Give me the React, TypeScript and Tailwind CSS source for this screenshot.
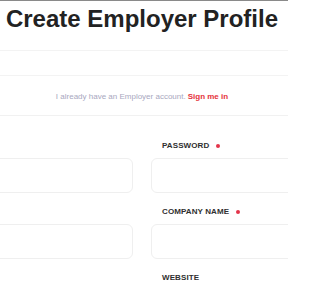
const fields = [
  { right: "PASSWORD", required: true },
  { right: "COMPANY NAME", required: true },
  { right: "WEBSITE", required: false },
];

function Field({ label, required }: { label?: string; required: boolean }) {
  return (
    <div className="flex flex-col">
      <div className="flex items-center h-[10px] pl-[11px] text-[8px] leading-[10px] font-bold text-[#2f2f2f] tracking-[0.1px]">
        {label}
        {label && required && <span className="ml-[7px] w-[4px] h-[4px] rounded-full bg-[#e3344a]" />}
      </div>
      <div className="mt-[7px] h-[35px] rounded-[6px] border border-[#efefef] bg-white" />
    </div>
  );
}

export default function App() {
  return (
    <div
      className="w-[288px] h-[288px] overflow-hidden bg-white border-t border-[#8a8a8a]"
      style={{ fontFamily: '"Liberation Sans", Arial, sans-serif' }}
    >
      <div className="w-[284px]">
        <h1 className="pt-[4px] text-center text-[24px] leading-[28px] font-bold text-[#222222]">
          Create Employer Profile
        </h1>
      </div>
      <div className="mt-[17px] h-[26px] border-y border-[#f3f3f3] bg-white" />
      <div className="w-[284px] h-[39px] pt-[2px] flex items-center justify-center text-[8px] leading-[10px]">
        <span className="text-[#a8a8c0]">I already have an Employer account.</span>
        <span className="ml-[2px] font-bold text-[#e5323c]">Sign me in</span>
      </div>
      <div className="border-t border-[#f1f1f1]" />
      <div className="ml-[-87px] w-[458px] grid grid-cols-2 gap-x-[18px] gap-y-[14px] pt-[25px]">
        {fields.map((row) => [
          <Field key={row.right + "-l"} required={row.required} />,
          <Field key={row.right} label={row.right} required={row.required} />,
        ])}
      </div>
    </div>
  );
}
